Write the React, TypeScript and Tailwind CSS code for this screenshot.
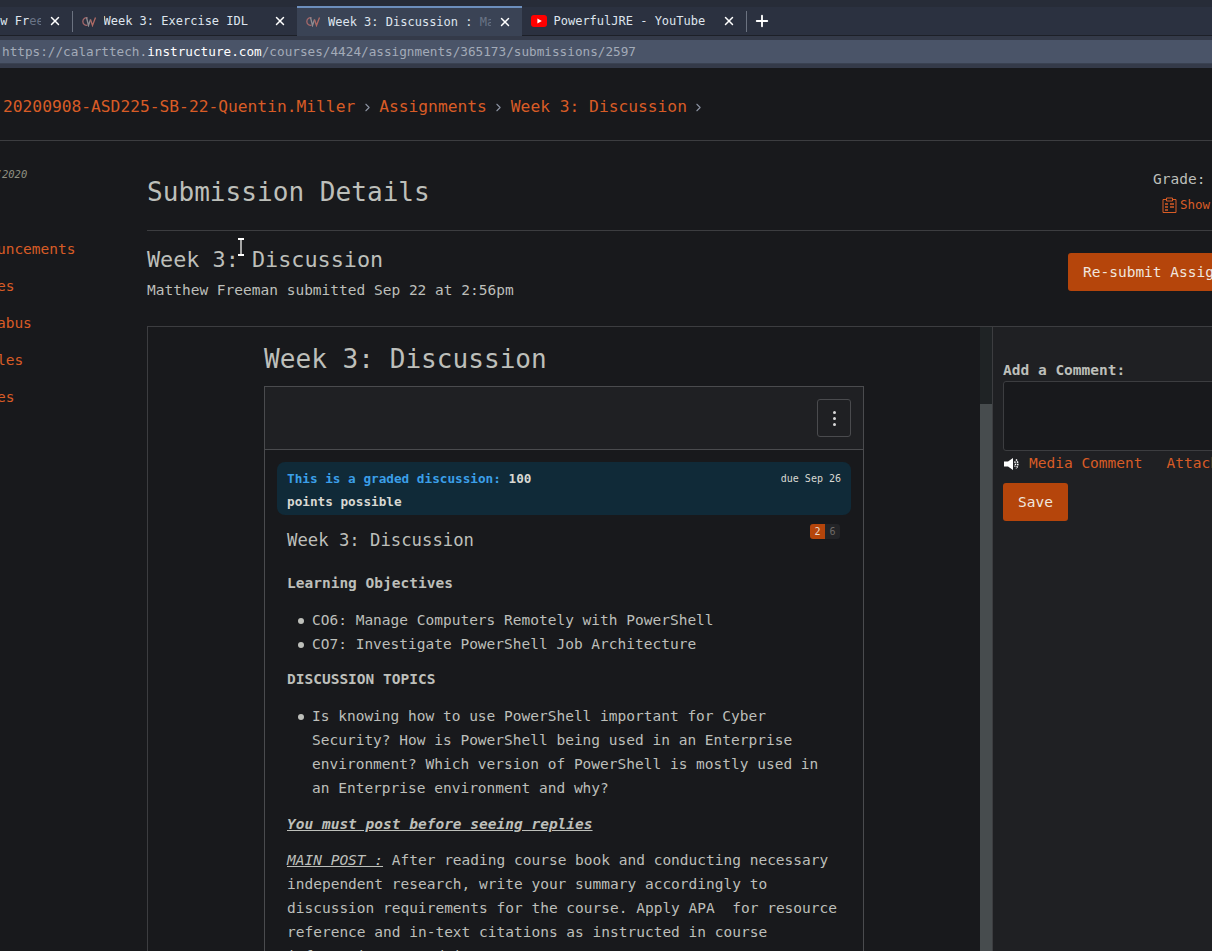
import { X, Plus, ChevronRight } from 'lucide-react'

const mono = "font-['DejaVu_Sans_Mono','Liberation_Mono',monospace]"

function CwIcon() {
  return (
    <svg width="15" height="11" viewBox="0 0 15 11" fill="none" className="shrink-0" strokeWidth="1.300">
      <path d="M5.500 1.800A3.800 3.800 0 1 0 5.500 9.200" stroke="#a5686a" />
      <path d="M4.500 1.500 6.500 9.500 8.500 3.500" stroke="#8d8d93" />
      <path d="M8.500 3.500 10.500 9.500 13.500 1.500" stroke="#b06a64" />
    </svg>
  )
}

function YoutubeIcon() {
  return (
    <svg width="16" height="12" viewBox="0 0 16 12" className="shrink-0">
      <rect width="16" height="12" rx="3" fill="#f00" />
      <path d="M6.400 3.400 10.800 6 6.400 8.600z" fill="#fff" />
    </svg>
  )
}

function Tab({ icon, title, active, fade, narrow }: { icon?: React.ReactNode; title: string; active?: boolean; fade?: string; narrow?: boolean }) {
  return (
    <div
      className={`shrink-0 flex items-center pl-[9px] pr-[10px] gap-[7px] text-[#dfe5ee] text-[12px] ${narrow ? 'w-[123.5px]' : 'w-[224.5px]'} ${
        active ? 'bg-[#3a4355] border-t-2 border-[#6d8fbd] h-[30px] -mt-px' : 'h-[29px]'
      }`}
    >
      {icon}
      <span className="flex-1 whitespace-pre overflow-hidden">
        {title}
        {fade && <span className="text-[#6a7486]">{fade}</span>}
      </span>
      <X size={14} strokeWidth={2.5} className="shrink-0 text-white" />
    </div>
  )
}

function Sep() {
  return <ChevronRight size={13} className="text-[#8b93a1]" />
}

function Bullet({ children }: { children: React.ReactNode }) {
  return (
    <li className="flex">
      <span className="w-[25px] shrink-0 pl-[11px] pt-[10px]">
        <span className="block w-[6px] h-[6px] rounded-full bg-[#bdbfba]" />
      </span>
      <span>{children}</span>
    </li>
  )
}

const navItems = ['Announcements', 'Slides', 'Syllabus', 'Modules', 'Grades']

export default function App() {
  return (
    <div className={`w-[1212px] h-[951px] overflow-hidden bg-[#18191c] flex flex-col ${mono}`}>
      {/* browser chrome */}
      <div className="bg-[#272c38] pt-[7px] shrink-0">
        <div className="bg-[#2b3140] h-[29px] flex items-center -ml-[52px] border-b border-[#1d2028]">
          <Tab title="Preview Fr" fade="ee" narrow />
          <span className="w-px h-[21px] bg-[#6b7280] shrink-0" />
          <Tab icon={<CwIcon />} title="Week 3: Exercise IDL" />
          <Tab icon={<CwIcon />} title="Week 3: Discussion :" fade=" Ma" active />
          <Tab icon={<YoutubeIcon />} title="PowerfulJRE - YouTube" />
          <span className="w-px h-[21px] bg-[#6b7280] shrink-0" />
          <Plus size={18} strokeWidth={2.5} className="ml-[6px] text-white" />
        </div>
      </div>
      <div className="bg-[#343a49] h-[32px] shrink-0 pt-[4px] border-b-[4px] border-[#343a49]">
        <div className="bg-[#4a5468] h-[24px] flex items-center pl-[2px] text-[12.7px] text-[#a3abb8] border-b border-[#3a4252] whitespace-pre">
          https://calarttech.<span className="text-white">instructure.com</span>/courses/4424/assignments/365173/submissions/2597
        </div>
      </div>

      {/* breadcrumbs */}
      <div className="h-[73px] shrink-0 border-b border-[#3c3d40] flex items-center pl-[3px] pt-[6px] gap-[5.5px] text-[16.25px] text-[#d85c26]">
        <span>20200908-ASD225-SB-22-Quentin.Miller</span>
        <Sep />
        <span>Assignments</span>
        <Sep />
        <span>Week 3: Discussion</span>
        <Sep />
      </div>

      <div className="flex flex-1 min-h-0">
        {/* left nav */}
        <div className="w-[185px] -ml-[38px] shrink-0 pt-[26px]">
          <div className="text-[10.5px] italic text-[#8f8f80] pl-[2px] h-[14px] whitespace-pre">09/08/2020</div>
          <ul className="mt-[57px] flex flex-col gap-[15px] text-[14.5px] leading-[22px] text-[#d85c26]">
            {navItems.map((item) => (
              <li key={item}>{item}</li>
            ))}
          </ul>
        </div>

        {/* main */}
        <div className="flex-1 min-w-0 flex flex-col">
          <div className="h-[90px] shrink-0 border-b border-[#3c3d40] flex justify-between">
            <h1 className="text-[26.1px] leading-[32px] text-[#bdbfba] pt-[35px]">Submission Details</h1>
            <div className="w-[59px] overflow-hidden pt-[29px] text-[14.5px] shrink-0">
              <div className="text-[#bdbfba] leading-[18px] whitespace-pre">Grade:</div>
              <div className="flex items-center gap-[3px] text-[12.5px] text-[#d85c26] pl-[9px] mt-[8px]">
                <svg width="15" height="16" viewBox="0 0 15 16" fill="none" stroke="#d85c26" className="shrink-0">
                  <path d="M1 2.500h3M11 2.500h3v13H1v-13M4.500 1h6v3h-6z" />
                  <path d="M3 7h3M8 7h4M3 10h3M8 10h4M3 13h3" strokeWidth="1.300" />
                </svg>
                <span>Show</span>
              </div>
            </div>
          </div>

          <div className="h-[95px] shrink-0 flex justify-between">
            <div className="pt-[14px]">
              <h2 className="text-[21.8px] leading-[29px] text-[#bdbfba]">Week 3: Discussion</h2>
              <p className="text-[14.5px] leading-[22px] text-[#bdbfba] mt-[5px]">Matthew Freeman submitted Sep 22 at 2:56pm</p>
            </div>
            <div className="w-[144px] pt-[22px] shrink-0 overflow-hidden">
              <div className="h-[38px] w-[220px] bg-[#b5450b] rounded-[3px] pl-[15px] pt-[2px] flex items-center text-[14.5px] text-[#f0e6de] whitespace-pre">
                Re-submit Assignment
              </div>
            </div>
          </div>

          <div className="flex-1 min-h-0 border-t border-l border-[#3c3d40] flex">
            {/* iframe */}
            <div className="w-[832px] shrink-0 pl-[116px] pt-[15px] overflow-hidden">
              <h2 className="text-[26.1px] leading-[34px] text-[#bdbfba]">Week 3: Discussion</h2>
              <div className="mt-[10px] w-[600px] border border-[#4a4b4e]">
                <div className="h-[63px] bg-[#1f2023] border-b border-[#4a4b4e] flex justify-end items-start pt-[12px] pr-[12px]">
                  <div className="w-[34px] h-[38px] border border-[#4a4b4e] rounded-[3px] flex flex-col items-center justify-center gap-[3px]">
                    <span className="w-[3px] h-[3px] rounded-full bg-[#d8d8d8]" />
                    <span className="w-[3px] h-[3px] rounded-full bg-[#d8d8d8]" />
                    <span className="w-[3px] h-[3px] rounded-full bg-[#d8d8d8]" />
                  </div>
                </div>
                <div className="px-[12px] pt-[12px]">
                  <div className="relative h-[53px] bg-[#102a38] rounded-[8px] pl-[10px] pr-[10px] pt-[5px] text-[12.7px] leading-[23px] font-bold text-[#d8d8d2]">
                    <div className="flex justify-between">
                      <span>
                        <span className="text-[#3b9fe8]">This is a graded discussion:</span> 100
                      </span>
                      <span className="text-[10px] font-normal">due Sep 26</span>
                    </div>
                    <div>points possible</div>
                  </div>
                  <div className="flex justify-between pl-[10px] pr-[11px] pt-[9px]">
                    <h3 className="text-[17.25px] leading-[32px] text-[#bdbfba]">Week 3: Discussion</h3>
                    <div className="flex h-[15px] text-[10px] leading-[15px]">
                      <span className="w-[15px] text-center bg-[#b5450b] rounded-l-[3px] text-[#ead8cc]">2</span>
                      <span className="w-[15px] text-center bg-[#232427] rounded-r-[3px] text-[#6f6a66]">6</span>
                    </div>
                  </div>
                  <div className="pl-[10px] pr-[10px] text-[14.5px] leading-[24px] text-[#bdbfba]">
                    <p className="font-bold mt-[15px]">Learning Objectives</p>
                    <ul className="mt-[13px]">
                      <Bullet>CO6: Manage Computers Remotely with PowerShell</Bullet>
                      <Bullet>CO7: Investigate PowerShell Job Architecture</Bullet>
                    </ul>
                    <p className="font-bold mt-[11px]">DISCUSSION TOPICS</p>
                    <ul className="mt-[13px]">
                      <Bullet>
                        Is knowing how to use PowerShell important for Cyber Security? How is PowerShell being used in an
                        Enterprise environment? Which version of PowerShell is mostly used in an Enterprise environment and why?
                      </Bullet>
                    </ul>
                    <p className="mt-[12px] font-bold italic underline">You must post before seeing replies</p>
                    <p className="mt-[12px] whitespace-pre-wrap">
                      <span className="italic underline">MAIN POST :</span> After reading course book and conducting necessary
                      independent research, write your summary accordingly to discussion requirements for the course. Apply APA{'  '}for resource
                      reference and in-text citations as instructed in course information stated in
                    </p>
                  </div>
                </div>
              </div>
            </div>
            {/* scrollbar */}
            <div className="w-[12px] shrink-0 flex flex-col">
              <div className="h-[77px] bg-[#1f2325]" />
              <div className="flex-1 bg-[#474c4e]" />
            </div>
            {/* side comments */}
            <div className="w-[220px] shrink-0 border-l border-[#3c3d40] bg-[#1f2023] pl-[10px] pt-[33px]">
              <div className="text-[14.5px] leading-[20px] font-bold text-[#bdbfba]">Add a Comment:</div>
              <div className="h-[70px] w-[260px] mt-px bg-[#18191c] border border-[#3c3d40] rounded-[3px]" />
              <div className="flex items-center h-[24px] pt-px text-[14.5px] text-[#d85c26] whitespace-pre">
                <svg width="16" height="14" viewBox="0 0 16 14" className="ml-[1px] mr-[9px] shrink-0">
                  <path d="M0 4.500h4L9 1v12L4 9.500H0z" fill="#fff" />
                  <path d="M10.500 4.500a3.500 3.500 0 0 1 0 5M12 2.500a6.500 6.500 0 0 1 0 9" fill="none" stroke="#fff" strokeWidth="1.500" strokeDasharray="1.500 0.800" />
                </svg>
                <span>Media Comment</span>
                <span className="ml-[24px]">Attach</span>
              </div>
              <div className="mt-[8px] w-[65px] h-[38px] bg-[#b5450b] rounded-[3px] pt-[2px] flex items-center justify-center text-[14.5px] text-[#f0e6de]">
                Save
              </div>
            </div>
          </div>
        </div>
      </div>

      {/* i-beam pointer over the heading */}
      <svg width="8" height="18" viewBox="0 0 8 18" className="absolute left-[237px] top-[238px]">
        <path d="M1 1h6M1 17h6M4 1v16" stroke="#fff" strokeWidth="2" />
        <path d="M4 2v14" stroke="#222" strokeWidth="0.800" />
      </svg>
    </div>
  )
}
